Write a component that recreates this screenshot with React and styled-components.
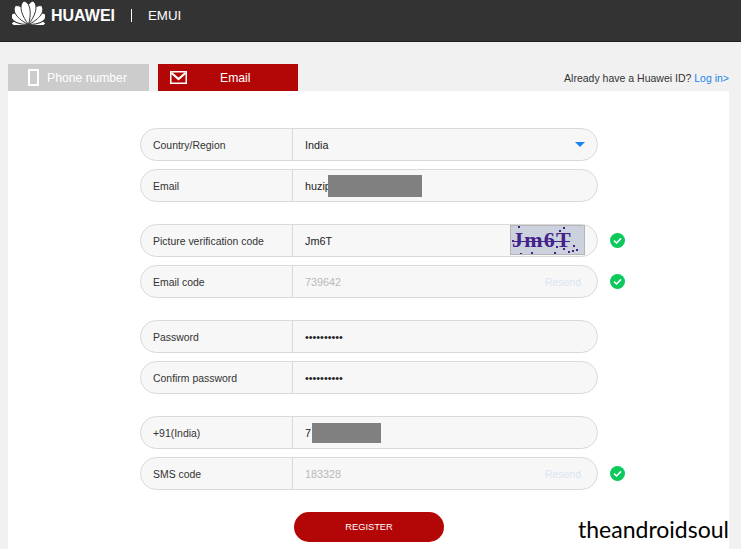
import React from "react";
import styled, { createGlobalStyle } from "styled-components";

const GlobalStyle = createGlobalStyle`
  html, body {
    margin: 0;
    padding: 0;
    height: 549px;
    overflow: hidden;
    background: #f1f1f1;
    font-family: "Liberation Sans", Arial, sans-serif;
  }
`;

// angle, length, width of each petal, fanning out from the bottom centre
const petals = [
  [86, 17, 5.5],
  [60, 20, 8.5],
  [35, 23, 9],
  [11, 24, 8.5],
];

const petalPath = (len, w) =>
  `M0 0 C${-w * 0.5} ${-len * 0.35} ${-w * 0.85} ${-len * 0.85} 0 ${-len} C${w * 0.85} ${-len * 0.85} ${w * 0.5} ${-len * 0.35} 0 0 Z`;

const HuaweiLogo = () => (
  <svg width="33" height="25" viewBox="0 0 33 25">
    {petals.flatMap(([angle, len, w]) =>
      [angle, -angle].map((a) => (
        <path
          key={a}
          d={petalPath(len, w)}
          fill="#fff"
          stroke="#333"
          strokeWidth="0.9"
          transform={`translate(16.5 24.5) rotate(${a})`}
        />
      ))
    )}
  </svg>
);

const PhoneIcon = () => (
  <svg width="11" height="17" viewBox="0 0 11 17">
    <rect x="1" y="1" width="9" height="15" fill="none" stroke="#fff" strokeWidth="2" />
  </svg>
);

const MailIcon = () => (
  <svg width="17" height="13" viewBox="0 0 17 13">
    <rect x="0.75" y="0.75" width="15.5" height="11.5" fill="none" stroke="#fff" strokeWidth="1.5" />
    <path d="M1.5 2 L8.5 8 L15.5 2" fill="none" stroke="#fff" strokeWidth="2.2" />
  </svg>
);

const CheckIcon = () => (
  <svg width="15" height="15" viewBox="0 0 15 15">
    <circle cx="7.5" cy="7.5" r="7.5" fill="#0bc95a" />
    <path d="M4 7.6 L6.6 10 L11 5.4" fill="none" stroke="#fff" strokeWidth="1.6" />
  </svg>
);

const noise = [
  [7, 0], [52, 1], [1, 14], [62, 19], [9, 27], [20, 26], [43, 26], [57, 25],
  [61, 24], [65, 23], [52, 22], [45, 20], [48, 4],
];

const CaptchaImage = () => (
  <Captcha>
    {noise.map(([x, y]) => (
      <Speck key={`${x}-${y}`} style={{ left: x, top: y }} />
    ))}
    <Strike />
    Jm6T
  </Captcha>
);

const fields = [
  [
    { label: "Country/Region", value: "India", select: true },
    { label: "Email", value: "huzip", redact: 94, shift: -3 },
  ],
  [
    { label: "Picture verification code", value: "Jm6T", captcha: true, ok: true },
    { label: "Email code", value: "739642", hint: true, resend: true, ok: true },
  ],
  [
    { label: "Password", value: "••••••••••" },
    { label: "Confirm password", value: "••••••••••" },
  ],
  [
    { label: "+91(India)", value: "7", redact: 69, shift: 1, short: true },
    { label: "SMS code", value: "183328", hint: true, resend: true, ok: true },
  ],
];

const App = () => {
  return (
    <Page>
      <GlobalStyle />
      <Header>
        <HuaweiLogo />
        <Brand>HUAWEI</Brand>
        <Divider />
        <Product>EMUI</Product>
      </Header>
      <Main>
        <TabBar>
          <Tab>
            <PhoneIcon />
            <TabLabel>Phone number</TabLabel>
          </Tab>
          <Tab $active>
            <MailIcon />
            <TabLabel $active>Email</TabLabel>
          </Tab>
          <LoginNote>
            Already have a Huawei ID? <LoginLink>Log in&gt;</LoginLink>
          </LoginNote>
        </TabBar>
        <Card>
          {fields.map((group, idx) => (
            <Group key={idx}>
              {group.map((f) => (
                <FieldRow key={f.label}>
                  <Field>
                    <Label>{f.label}</Label>
                    <Value $hint={f.hint}>
                      <span>{f.value}</span>
                      {f.redact && (
                        <Redaction $width={f.redact} $shift={f.shift} $short={f.short} />
                      )}
                      {f.select && <Caret />}
                      {f.captcha && <CaptchaImage />}
                      {f.resend && <Resend>Resend</Resend>}
                    </Value>
                  </Field>
                  {f.ok && <CheckIcon />}
                </FieldRow>
              ))}
            </Group>
          ))}
          <Register>REGISTER</Register>
          <Watermark>theandroidsoul</Watermark>
        </Card>
      </Main>
    </Page>
  );
};

export default App;

const Page = styled.div`
  width: 741px;
  height: 549px;
  overflow: hidden;
`;

const Header = styled.div`
  height: 41px;
  background: #333333;
  border-bottom: 1px solid #1f1f1f;
  display: flex;
  align-items: flex-start;
  padding: 0 0 0 12px;
  color: #fff;
`;

const Brand = styled.div`
  font-size: 16px;
  font-weight: bold;
  line-height: 18px;
  margin: 7px 0 0 6px;
`;

const Divider = styled.div`
  width: 1px;
  height: 13px;
  background: #fff;
  margin: 9px 0 0 16px;
`;

const Product = styled.div`
  font-size: 13.3px;
  line-height: 16px;
  margin: 8px 0 0 16px;
`;

const Main = styled.div`
  padding: 22px 12px 0 8px;
`;

const TabBar = styled.div`
  display: flex;
  align-items: stretch;
  height: 27px;
  gap: 9px;
`;

const Tab = styled.div`
  display: flex;
  align-items: center;
  padding-left: ${(p) => (p.$active ? "12px" : "20px")};
  box-sizing: border-box;
  width: ${(p) => (p.$active ? "140px" : "141px")};
  background: ${(p) => (p.$active ? "#b30606" : "#cccccc")};
  color: #fff;
`;

const TabLabel = styled.span`
  font-size: 12.2px;
  margin-left: ${(p) => (p.$active ? "33px" : "8px")};
`;

const LoginNote = styled.div`
  margin-left: auto;
  align-self: center;
  font-size: 10.5px;
  color: #333;
`;

const LoginLink = styled.span`
  color: #1a84ee;
`;

const Card = styled.div`
  position: relative;
  background: #fff;
  height: 458px;
  padding: 37px 0 0 132px;
  box-sizing: border-box;
  display: flex;
  flex-direction: column;
  gap: 22px;
`;

const Group = styled.div`
  display: flex;
  flex-direction: column;
  gap: 8px;
`;

const FieldRow = styled.div`
  display: flex;
  align-items: center;
  gap: 12px;
`;

const Field = styled.div`
  width: 458px;
  height: 33px;
  box-sizing: border-box;
  border: 1px solid #d9d9d9;
  border-radius: 17px;
  background: #f7f7f7;
  display: flex;
  overflow: hidden;
`;

const Label = styled.div`
  width: 152px;
  flex: none;
  box-sizing: border-box;
  padding-left: 12px;
  border-right: 1px solid #d9d9d9;
  font-size: 10.45px;
  line-height: 33px;
  color: #333;
`;

const Value = styled.div`
  flex: 1;
  position: relative;
  display: flex;
  align-items: center;
  padding-left: 12px;
  font-size: 10.8px;
  color: ${(p) => (p.$hint ? "#b9b9b9" : "#222")};
`;

const Redaction = styled.span`
  display: block;
  width: ${(p) => p.$width}px;
  height: ${(p) => (p.$short ? 20 : 22)}px;
  background: #808080;
  margin-left: ${(p) => p.$shift}px;
`;

const Caret = styled.span`
  position: absolute;
  right: 12px;
  top: 13px;
  width: 0;
  height: 0;
  border-left: 5px solid transparent;
  border-right: 5px solid transparent;
  border-top: 5px solid #1a84ee;
`;

const Captcha = styled.div`
  position: absolute;
  right: 12px;
  top: 0;
  width: 75px;
  height: 30px;
  box-sizing: border-box;
  border: 1px solid #b5b5b5;
  background: #cbd2de;
  color: #45218a;
  font-family: "Liberation Serif", serif;
  font-weight: bold;
  font-size: 22px;
  line-height: 27px;
  padding-left: 1px;
  letter-spacing: 1.2px;
  overflow: hidden;
`;

const Strike = styled.i`
  position: absolute;
  left: 1px;
  top: 15px;
  width: 58px;
  height: 1px;
  background: #45218a;
`;

const Speck = styled.i`
  position: absolute;
  width: 2px;
  height: 2px;
  background: #45218a;
`;

const Resend = styled.span`
  position: absolute;
  right: 16px;
  top: 10px;
  font-size: 10.5px;
  color: #dbe4f5;
`;

const Register = styled.div`
  width: 150px;
  height: 30px;
  margin: 0 0 0 154px;
  border-radius: 15px;
  background: #b30606;
  color: #fff;
  font-size: 9.3px;
  line-height: 30px;
  text-align: center;
`;

const Watermark = styled.div`
  position: absolute;
  right: 0;
  bottom: 6px;
  font-family: "Lato", sans-serif;
  font-weight: 400;
  font-size: 23px;
  color: #000;
`;
